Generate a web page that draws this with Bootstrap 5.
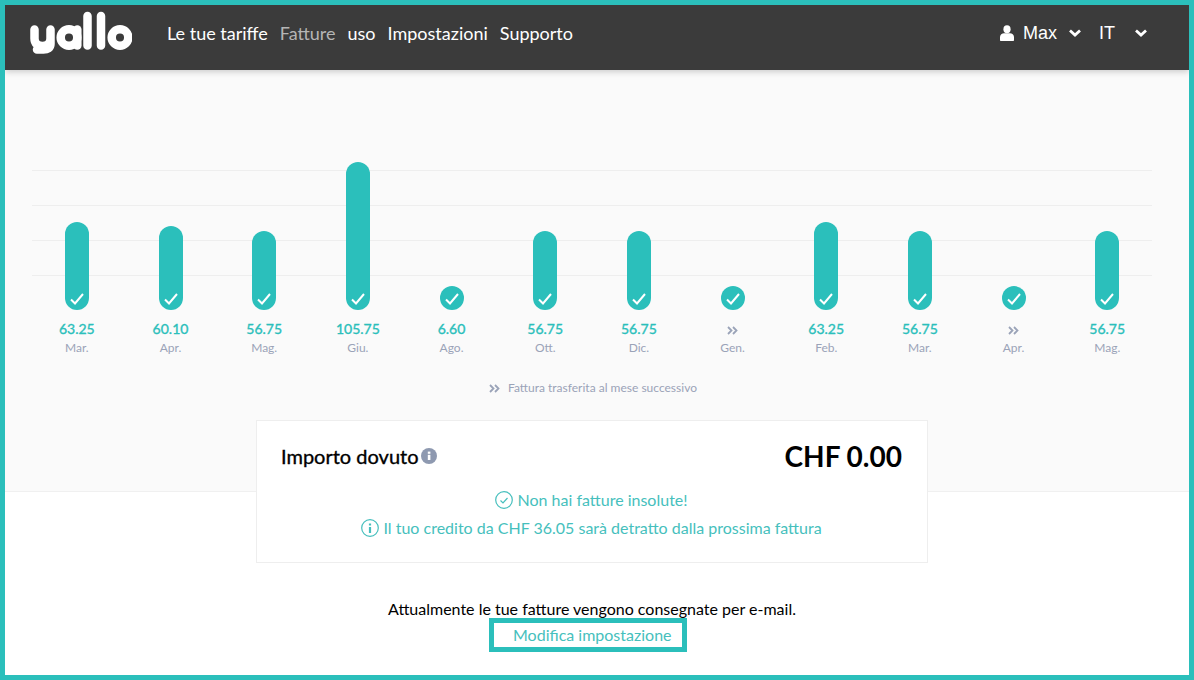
<!DOCTYPE html>
<html lang="it">
<head>
  <meta charset="UTF-8" />
  <meta name="viewport" content="width=device-width, initial-scale=1" />
  <title>yallo - Fatture</title>
  <link href="https://cdn.jsdelivr.net/npm/bootstrap@5.3.3/dist/css/bootstrap.min.css" rel="stylesheet" />
  <style>
    html, body { height: 100%; }

    body {
      font-family: Lato, "Liberation Sans", sans-serif;
      font-size: 16px;
      color: #000;
      border: 5px solid #2bbfbb;
      overflow: hidden;
    }

    .top-bar {
      background: #3b3b3b;
      height: 65px;
      padding: 6px 25px 0;
      box-shadow: 0 2px 6px rgba(0,0,0,.18);
      position: relative;
    }

    .top-bar .nav { margin-top: 10px; }

    .top-bar .nav-link {
      color: #fff;
      font-size: 18px;
      padding: 0;
      margin-right: 12px;
      line-height: 24px;
    }
    .top-bar .nav-link.active { color: #b5b5b5; }

    .logo-box { width: 102px; height: 44px; margin-right: 35px; }

    .user-box {
      color: #fff;
      font-family: "Liberation Sans", sans-serif;
      font-size: 18px;
      height: 24px;
      margin-top: 10px;
      margin-right: 17px;
    }
    .user-box .user-icon { margin-right: 9px; }
    .user-box .chev-max { margin-left: 12px; margin-right: 18px; }
    .user-box .chev-lang { margin-left: 20px; }

    .chart-area {
      background: #fafafa;
      height: 422px;
      padding: 66px 35px 0 25px;
      border-bottom: 1px solid #f0f0f0;
    }

    .plot-rows {
      height: 174px;
      background-image: linear-gradient(to top, #eeeeee 1px, transparent 1px);
      background-size: calc(100% - 4px) 35px;
      background-position: center top;
      background-repeat: repeat-y;
    }

    .month-col { flex: 1 1 0; text-align: center; }

    .pay-bar {
      width: 24px;
      border-radius: 12px;
      background: #2bbfbb;
      display: flex;
      align-items: flex-end;
      justify-content: center;
      padding-bottom: 5px;
    }

    .pay-value {
      color: #2bbfbb;
      font-size: 14px;
      -webkit-text-stroke: .35px #2bbfbb;
      line-height: 18px;
      margin-top: 10px;
    }
    .pay-month {
      color: #9aa3b8;
      font-size: 12px;
      line-height: 16px;
      margin-top: 2px;
    }

    .moved-note {
      color: #9aa3b8;
      font-size: 12px;
      line-height: 16px;
      margin-top: 24px;
      padding-left: 2px;
    }
    .moved-note svg { margin-right: 8px; }

    .lower-area { padding-right: 10px; }

    .due-card {
      width: 672px;
      height: 143px;
      margin: -72px auto 0;
      background: #fff;
      border: 1px solid #eeeeee;
      padding: 0 25px 0 24px;
    }

    .due-title { font-size: 20px; -webkit-text-stroke: .35px #000; line-height: 24px; }
    .due-title svg { margin-left: 2px; }
    .due-title-line { height: 69px; }
    .due-amount { font-size: 28px; font-weight: 700; line-height: 36px; }

    .due-msg {
      color: #46bfbd;
      font-size: 16px;
      line-height: 20px;
      margin-bottom: 8px;
    }

    .email-note {
      margin-top: 36px;
      line-height: 20px;
    }

    .change-link {
      display: inline-block;
      width: 198px;
      height: 34px;
      margin-top: -1px;
      margin-right: 8px;
      border: 5px solid #2bbfbb;
      color: #46bfbd;
      text-decoration: none;
      line-height: 23px;
      padding-left: 19px;
      text-align: left;
    }
  </style>
</head>
<body>

  <!-- Navbar -->
  <nav class="top-bar d-flex align-items-start">
    <a href="#" class="logo-box d-block">
      <svg width="102" height="44" viewBox="0 0 102 44" fill="none" stroke="#fff" stroke-width="8.5" stroke-linecap="round" stroke-linejoin="round">
        <path d="M4.500 18.500v9c0 5 3 7.500 8 7.500s8-2.500 8-7.500v-9M20.500 27v6c0 4-3 5.500-7 5.500H7" />
        <circle cx="39" cy="26.500" r="8.300" />
        <path d="M47.300 18.500v16" />
        <path d="M57.500 5v29.500M71 5v29.500" />
        <circle cx="90" cy="26.500" r="8.300" />
      </svg>
    </a>
    <ul class="nav flex-grow-1">
      <li class="nav-item"><a class="nav-link" href="#">Le tue tariffe</a></li>
      <li class="nav-item"><a class="nav-link active" href="#">Fatture</a></li>
      <li class="nav-item"><a class="nav-link" href="#">uso</a></li>
      <li class="nav-item"><a class="nav-link" href="#">Impostazioni</a></li>
      <li class="nav-item"><a class="nav-link" href="#">Supporto</a></li>
    </ul>
    <div class="user-box d-flex align-items-center">
      <svg width="14" height="16" viewBox="0 0 14 16" fill="#fff" class="user-icon">
        <ellipse cx="7" cy="4.200" rx="3.600" ry="4" />
        <path d="M0 15v-3c0-2.500 2-3.800 4-3.800h6c2 0 4 1.300 4 3.800v3c0 .6-.4 1-1 1H1c-.6 0-1-.4-1-1z" />
      </svg>
      <span>Max</span>
      <svg width="12" height="8" viewBox="0 0 12 8" fill="none" stroke="#fff" stroke-width="2.800" class="chev-max"><path d="M1 1.500l5 4.500 5-4.500" /></svg>
      <span>IT</span>
      <svg width="12" height="8" viewBox="0 0 12 8" fill="none" stroke="#fff" stroke-width="2.800" class="chev-lang"><path d="M1 1.500l5 4.500 5-4.500" /></svg>
    </div>
  </nav>

  <!-- Grafico -->
  <section class="chart-area">
    <div class="d-flex" id="chart-row"></div>
    <div class="moved-note text-center">
      <svg width="11" height="9" viewBox="0 0 11 9" fill="none" stroke="#9aa3b8" stroke-width="1.800"><path d="M1 1l3.500 3.500L1 8M6 1l3.500 3.500L6 8" /></svg>Fattura trasferita al mese successivo
    </div>
  </section>

  <!-- Importo dovuto -->
  <section class="lower-area text-center">
    <div class="due-card text-start">
      <div class="due-title-line d-flex justify-content-between align-items-center">
        <div class="due-title d-flex align-items-center">Importo dovuto
          <svg width="16" height="16" viewBox="0 0 16 16"><circle cx="8" cy="8" r="8" fill="#8e99b0" /><rect x="6.800" y="6.800" width="2.600" height="5.200" fill="#fff" /><rect x="6.800" y="3.600" width="2.600" height="2.200" fill="#fff" /></svg>
        </div>
        <div class="due-amount">CHF 0.00</div>
      </div>
      <div class="due-msg text-center">
        <svg width="18" height="18" viewBox="0 0 18 18" fill="none" stroke="#46bfbd" stroke-width="1.200" class="align-text-bottom"><circle cx="9" cy="9" r="8.300" /><path d="M5.500 9.500l2.500 2.500 4.500-5" /></svg>
        Non hai fatture insolute!
      </div>
      <div class="due-msg text-center">
        <svg width="18" height="18" viewBox="0 0 18 18" fill="none" stroke="#46bfbd" stroke-width="1.200" class="align-text-bottom"><circle cx="9" cy="9" r="8.300" /><path d="M9 8v6" stroke-width="2.200" /><path d="M9 4.500v2" stroke-width="2.200" /></svg>
        Il tuo credito da CHF 36.05 sarà detratto dalla prossima fattura
      </div>
    </div>

    <p class="email-note mb-0">Attualmente le tue fatture vengono consegnate per e-mail.</p>
    <a href="#" class="change-link">Modifica impostazione</a>
  </section>

  <script src="https://cdn.jsdelivr.net/npm/bootstrap@5.3.3/dist/js/bootstrap.bundle.min.js"></script>

  <script>
    // value null = fattura trasferita al mese successivo
    const months = [
      { m: 'Mar.', v: '63.25' }, { m: 'Apr.', v: '60.10' }, { m: 'Mag.', v: '56.75' },
      { m: 'Giu.', v: '105.75' }, { m: 'Ago.', v: '6.60' }, { m: 'Ott.', v: '56.75' },
      { m: 'Dic.', v: '56.75' }, { m: 'Gen.', v: null }, { m: 'Feb.', v: '63.25' },
      { m: 'Mar.', v: '56.75' }, { m: 'Apr.', v: null }, { m: 'Mag.', v: '56.75' }
    ];
    const check = '<svg width="14" height="12" viewBox="0 0 14 12" fill="none" stroke="#fff" stroke-width="2"><path d="M1 6.500l4 4L13 1" /></svg>';
    const moved = '<svg width="11" height="9" viewBox="0 0 11 9" fill="none" stroke="#9aa3b8" stroke-width="1.800"><path d="M1 1l3.500 3.500L1 8M6 1l3.500 3.500L6 8" /></svg>';

    const row = document.getElementById('chart-row');
    const plot = document.createElement('div');
    plot.className = 'plot-rows d-flex w-100';
    row.parentNode.insertBefore(plot, row);
    months.forEach(item => {
      const h = Math.max(24, Math.floor(parseFloat(item.v || 0) * 1.4));
      const col = document.createElement('div');
      col.className = 'month-col d-flex flex-column align-items-center justify-content-end';
      col.innerHTML = `<div class="pay-bar" style="height:${h}px">${check}</div>`;
      plot.appendChild(col);

      const label = document.createElement('div');
      label.className = 'month-col';
      label.innerHTML = `<div class="pay-value">${item.v || moved}</div><div class="pay-month">${item.m}</div>`;
      row.appendChild(label);
    });
  </script>

</body>
</html>
